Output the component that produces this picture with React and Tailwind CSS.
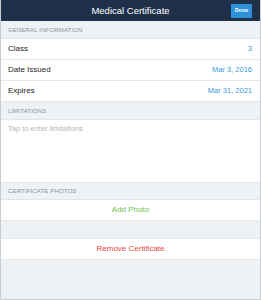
import React from "react";

const SectionHeader = ({ title, h = "h-[18px]" }) => (
  <div className={`${h} shrink-0 flex items-center bg-[#eef2f5] border-b border-[#e1e5e9] pl-[7px] text-[6px] leading-none tracking-[0.15px] text-[#8b9096] uppercase`}>
    {title}
  </div>
);

const Row = ({ label, value }) => (
  <div className="h-[21px] shrink-0 flex items-center justify-between bg-white border-b border-[#e6e9ec] pl-[7px] pr-[8px] text-[8px] leading-none">
    <span className="text-[#1c1c1c]">{label}</span>
    <span className="text-[7.5px] text-[#3d9ae0]">{value}</span>
  </div>
);

const App = () => {
  return (
    <div className="w-[261px] h-[300px] flex flex-col bg-[#eef2f5] border-x border-b border-[#c9cdd1] overflow-hidden" style={{ fontFamily: '"Liberation Sans", Arial, sans-serif' }}>
      <div className="h-[21px] shrink-0 relative flex items-center justify-center bg-[#1f3149]">
        <span className="text-[9.5px] leading-none text-white">Medical Certificate</span>
        <button className="absolute right-[8px] top-[4px] w-[21px] h-[14px] bg-[#2e90d8] text-white text-[5.5px] leading-none font-bold flex items-center justify-center">
          Done
        </button>
      </div>

      <SectionHeader title="General Information" />
      <Row label="Class" value="3" />
      <Row label="Date Issued" value="Mar 3, 2016" />
      <Row label="Expires" value="Mar 31, 2021" />

      <SectionHeader title="Limitations" />
      <div className="h-[63px] shrink-0 bg-white border-b border-[#e1e5e9] pl-[7px] pt-[5px] text-[7.5px] leading-none text-[#b3b6b9]">
        Tap to enter limitations
      </div>

      <SectionHeader title="Certificate Photos" h="h-[17px]" />
      <div className="h-[21px] shrink-0 flex items-center justify-center bg-white border-b border-[#e6e9ec] text-[8px] leading-none text-[#6cc04a]">
        Add Photo
      </div>

      <div className="h-[18px] shrink-0 border-b border-[#e6e9ec]"></div>
      <div className="h-[21px] shrink-0 flex items-center justify-center bg-white border-b border-[#e6e9ec] text-[8px] leading-none text-[#e8483d]">
        Remove Certificate
      </div>
    </div>
  );
};

export default App;
